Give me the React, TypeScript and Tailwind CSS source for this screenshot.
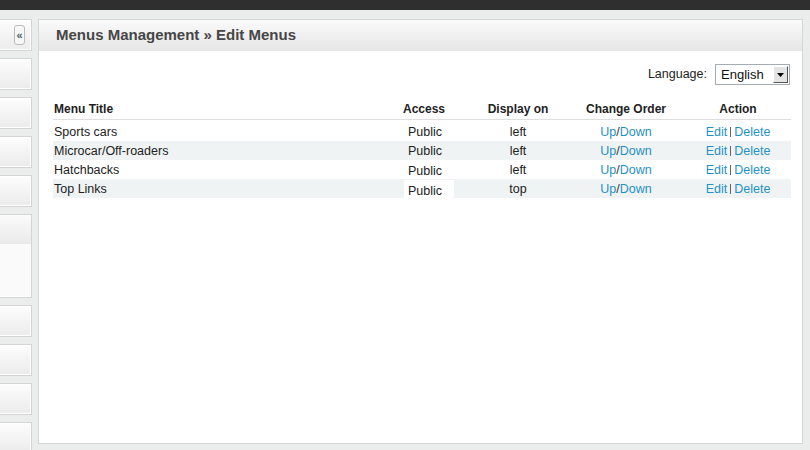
import React from "react";

const rows = [
  { title: "Sports cars", access: "Public", display: "left" },
  { title: "Microcar/Off-roaders", access: "Public", display: "left" },
  { title: "Hatchbacks", access: "Public", display: "left" },
  { title: "Top Links", access: "Public", display: "top" },
];

const cols = "grid grid-cols-[332px_78px_110px_106px_112px]";

function SideBox({ tall }: { tall?: boolean }) {
  if (tall) {
    return (
      <div className="ml-[-10px] w-[42px] h-[84px] border border-[#d3d5d4] bg-[#fafafa] shadow-[inset_0_0_0_1px_#ffffff] shrink-0">
        <div className="h-[29px] bg-gradient-to-b from-[#fbfbfb] to-[#e9e9e9]" />
      </div>
    );
  }
  return (
    <div className="ml-[-10px] w-[42px] h-[32px] border border-[#d3d5d4] bg-gradient-to-b from-[#fdfdfd] to-[#ebebeb] shadow-[inset_0_0_0_1px_#ffffff] shrink-0" />
  );
}

export default function App() {
  return (
    <div
      className="w-[810px] h-[450px] overflow-hidden bg-[#ebedec] text-[#222]"
      style={{ fontFamily: '"Liberation Sans", Arial, sans-serif' }}
    >
      <div className="h-[10px] bg-[#2f2f2f]" />
      <div className="flex">
        {/* sidebar */}
        <div className="w-[32px] h-[440px] overflow-hidden pt-[9px] flex flex-col gap-[7px] shrink-0">
          <div className="ml-[-10px] w-[42px] h-[32px] border border-[#d3d5d4] bg-gradient-to-b from-[#fdfdfd] to-[#ebebeb] shadow-[inset_0_0_0_1px_#ffffff] relative shrink-0">
            <div className="absolute left-[23px] top-[5px] w-[11px] h-[20px] rounded-[3px] border border-[#b9bcbb] bg-[#f6f6f6] flex items-center justify-center text-[11px] leading-none text-[#4a5a66] font-bold">
              «
            </div>
          </div>
          <SideBox />
          <SideBox />
          <SideBox />
          <SideBox />
          <SideBox tall />
          <SideBox />
          <SideBox />
          <SideBox />
          <SideBox />
        </div>

        {/* main panel */}
        <div className="ml-[6px] mt-[9px] w-[765px] h-[425px] border border-[#d4d6d5] bg-white flex flex-col shrink-0">
          <div className="h-[31px] bg-gradient-to-b from-[#fafafa] to-[#e6e6e6] flex items-center pl-[17px]">
            <span className="text-[15px] font-bold text-[#464646]">
              Menus Management » Edit Menus
            </span>
          </div>
          <div className="pl-[14px] pr-[11px]">
            <div className="flex justify-end items-center mt-[13px] h-[21px]">
              <span className="text-[12.5px] text-[#222] mr-[8px]">Language:</span>
              <div className="w-[75px] h-[21px] border border-[#a5acb2] flex items-center bg-white mr-[1px]">
                <span className="text-[13px] pl-[5px] flex-1 text-[#111]">English</span>
                <div className="w-[15px] h-[17px] mr-[1px] bg-[#e4e4e4] border border-t-white border-l-white border-b-[#555] border-r-[#555] flex items-center justify-center">
                  <svg width="7" height="4" viewBox="0 0 7 4">
                    <path d="M0 0h7L3.5 4z" fill="#000" />
                  </svg>
                </div>
              </div>
            </div>

            <div className="mt-[14px]">
              <div className={`${cols} h-[21px] items-center text-[12px] font-bold text-[#222] border-b border-[#dedede]`}>
                <div className="pl-[1px]">Menu Title</div>
                <div className="text-center">Access</div>
                <div className="text-center">Display on</div>
                <div className="text-center">Change Order</div>
                <div className="text-center pl-[6px]">Action</div>
              </div>
              <div className="pt-[2px]">
                {rows.map((r, i) => (
                  <div
                    key={r.title}
                    className={`${cols} h-[19px] items-center pt-[1px] text-[12.5px] text-[#222] ${i % 2 === 1 ? "bg-[#f0f3f3]" : "bg-white"}`}
                  >
                    <div className="pl-[1px]">{r.title}</div>
                    <div className="pl-[19px]">
                      {i === 3 ? (
                        <div className="w-[50px] h-[20px] mt-[-1px] mb-[-2px] pl-[4px] pt-[3px] bg-white leading-[16px]">
                          {r.access}
                        </div>
                      ) : (
                        <div className={`w-[50px] pl-[4px] relative ${i === 2 ? "top-[1px]" : ""}`}>
                          {r.access}
                        </div>
                      )}
                    </div>
                    <div className="text-center">{r.display}</div>
                    <div className="text-center">
                      <span className="text-[#1f91c6]">Up</span>
                      <span className="text-[#333]">/</span>
                      <span className="text-[#1f91c6]">Down</span>
                    </div>
                    <div className="text-center pl-[6px]">
                      <span className="text-[#1f91c6]">Edit</span>
                      <span className="inline-block w-[1px] h-[10px] bg-[#666] mx-[3px] align-[-1px]" />
                      <span className="text-[#1f91c6]">Delete</span>
                    </div>
                  </div>
                ))}
              </div>
            </div>
          </div>
        </div>
      </div>
    </div>
  );
}
